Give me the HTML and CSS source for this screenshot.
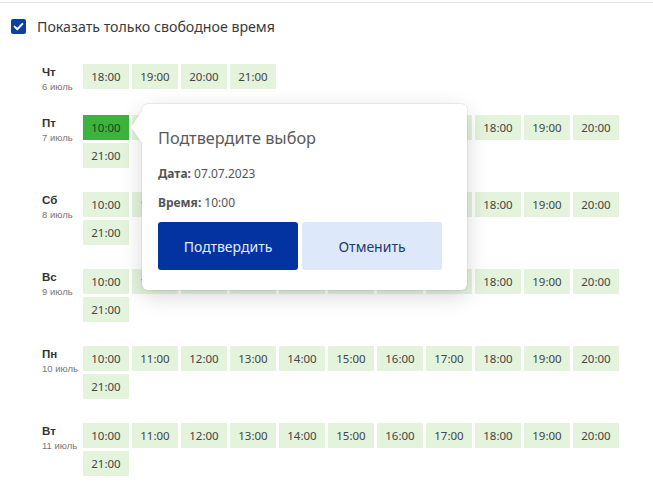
FILE: index.html
```html
<!DOCTYPE html>
<html lang="ru">
<head>
<meta charset="utf-8">
<title>Выбор времени</title>
<link rel="stylesheet" href="styles.css">
</head>
<body>
<div class="page">
  <div class="divider"></div>
  <label class="filter">
    <span class="checkbox">
      <svg viewBox="0 0 15 15" width="15" height="15"><path d="M3.6 7.6 L6.3 10.2 L11.4 4.9" fill="none" stroke="#fff" stroke-width="2" stroke-linecap="round" stroke-linejoin="round"/></svg>
    </span>
    <span class="filter-text">Показать только свободное время</span>
  </label>

  <div class="schedule">
    <div class="row">
      <div class="day"><div class="day-name">Чт</div><div class="day-date">6 июль</div></div>
      <div class="slots">
        <span class="slot">18:00</span><span class="slot">19:00</span><span class="slot">20:00</span><span class="slot">21:00</span>
      </div>
    </div>
    <div class="row">
      <div class="day"><div class="day-name">Пт</div><div class="day-date">7 июль</div></div>
      <div class="slots">
        <span class="slot selected">10:00</span><span class="slot">11:00</span><span class="slot">12:00</span><span class="slot">13:00</span><span class="slot">14:00</span><span class="slot">15:00</span><span class="slot">16:00</span><span class="slot">17:00</span><span class="slot">18:00</span><span class="slot">19:00</span><span class="slot">20:00</span><span class="slot">21:00</span>
      </div>
    </div>
    <div class="row">
      <div class="day"><div class="day-name">Сб</div><div class="day-date">8 июль</div></div>
      <div class="slots">
        <span class="slot">10:00</span><span class="slot">11:00</span><span class="slot">12:00</span><span class="slot">13:00</span><span class="slot">14:00</span><span class="slot">15:00</span><span class="slot">16:00</span><span class="slot">17:00</span><span class="slot">18:00</span><span class="slot">19:00</span><span class="slot">20:00</span><span class="slot">21:00</span>
      </div>
    </div>
    <div class="row">
      <div class="day"><div class="day-name">Вс</div><div class="day-date">9 июль</div></div>
      <div class="slots">
        <span class="slot">10:00</span><span class="slot">11:00</span><span class="slot">12:00</span><span class="slot">13:00</span><span class="slot">14:00</span><span class="slot">15:00</span><span class="slot">16:00</span><span class="slot">17:00</span><span class="slot">18:00</span><span class="slot">19:00</span><span class="slot">20:00</span><span class="slot">21:00</span>
      </div>
    </div>
    <div class="row">
      <div class="day"><div class="day-name">Пн</div><div class="day-date">10 июль</div></div>
      <div class="slots">
        <span class="slot">10:00</span><span class="slot">11:00</span><span class="slot">12:00</span><span class="slot">13:00</span><span class="slot">14:00</span><span class="slot">15:00</span><span class="slot">16:00</span><span class="slot">17:00</span><span class="slot">18:00</span><span class="slot">19:00</span><span class="slot">20:00</span><span class="slot">21:00</span>
      </div>
    </div>
    <div class="row">
      <div class="day"><div class="day-name">Вт</div><div class="day-date">11 июль</div></div>
      <div class="slots">
        <span class="slot">10:00</span><span class="slot">11:00</span><span class="slot">12:00</span><span class="slot">13:00</span><span class="slot">14:00</span><span class="slot">15:00</span><span class="slot">16:00</span><span class="slot">17:00</span><span class="slot">18:00</span><span class="slot">19:00</span><span class="slot">20:00</span><span class="slot">21:00</span>
      </div>
    </div>
  </div>

  <div class="popover">
    <div class="popover-title">Подтвердите выбор</div>
    <div class="popover-line"><b>Дата:</b> 07.07.2023</div>
    <div class="popover-line second"><b>Время:</b> 10:00</div>
    <div class="popover-actions">
      <button class="btn btn-primary">Подтвердить</button>
      <button class="btn btn-secondary">Отменить</button>
    </div>
  </div>
</div>
</body>
</html>
```

FILE: styles.css
```css
html, body {
  margin: 0;
  padding: 0;
  background: #fff;
}

body {
  font-family: "Noto Sans", "Open Sans", "DejaVu Sans", sans-serif;
  color: #333;
}

.page {
  position: relative;
  padding-top: 2px;
  height: 486px;
  overflow: hidden;
}

.divider {
  border-top: 1px solid #e4e4e4;
}

.filter {
  display: flex;
  align-items: center;
  margin: 16px 0 0 11px;
  height: 15px;
}

.checkbox {
  width: 15px;
  height: 15px;
  border-radius: 2px;
  background: #0c3fa5;
  display: block;
  flex: none;
}

.checkbox svg {
  display: block;
}

.filter-text {
  margin-left: 11px;
  font-size: 14.2px;
  line-height: 20px;
  color: #3a3a3a;
}

.schedule {
  margin-top: 30px;
  padding-left: 42px;
}

.row {
  display: flex;
  align-items: flex-start;
  margin-bottom: 24px;
}

.day {
  width: 41px;
  height: 27px;
  flex: none;
  font-family: "Liberation Sans", Arial, sans-serif;
}

.day-name {
  font-size: 11.5px;
  line-height: 14px;
  font-weight: bold;
  color: #333;
  padding-top: 1px;
}

.day-date {
  font-size: 9.5px;
  line-height: 12px;
  color: #777;
  margin-top: 2px;
}

.slots {
  width: 540px;
  display: flex;
  flex-wrap: wrap;
  gap: 3px;
}

.slot {
  width: 46px;
  height: 25px;
  display: flex;
  align-items: center;
  justify-content: center;
  background: #e3f3dc;
  font-size: 11.5px;
  color: #444;
}

.slot.selected {
  background: #3cb43c;
  color: #1f3f1f;
}

.popover {
  position: absolute;
  left: 142px;
  top: 104px;
  width: 325px;
  box-sizing: border-box;
  padding: 22px 16px 20px 16px;
  background: #fff;
  border-radius: 6px;
  box-shadow: 0 0 0 1px rgba(0, 0, 0, 0.05), 0 6px 22px rgba(0, 0, 0, 0.16);
}

.popover::before {
  content: "";
  position: absolute;
  left: -11px;
  top: 7px;
  width: 0;
  height: 0;
  border-top: 16px solid transparent;
  border-bottom: 16px solid transparent;
  border-right: 11px solid #fff;
  filter: drop-shadow(-1px 0 1px rgba(0, 0, 0, 0.07));
}

.popover-title {
  font-size: 16.3px;
  line-height: 24px;
  color: #5a5a5a;
}

.popover-line {
  margin-top: 15px;
  font-size: 12px;
  line-height: 18px;
  color: #555;
}

.popover-line b {
  font-weight: 700;
  color: #555;
}

.popover-line.second {
  margin-top: 11px;
}

.popover-actions {
  display: flex;
  gap: 4px;
  margin-top: 10px;
}

.btn {
  width: 140px;
  height: 48px;
  border: none;
  border-radius: 3px;
  font-family: "Noto Sans", "Open Sans", sans-serif;
  font-size: 14px;
  padding: 0;
  cursor: pointer;
}

.btn-primary {
  background: #0233a0;
  color: #e6edff;
}

.btn-secondary {
  background: #dde8fb;
  color: #1e3a70;
}
```
